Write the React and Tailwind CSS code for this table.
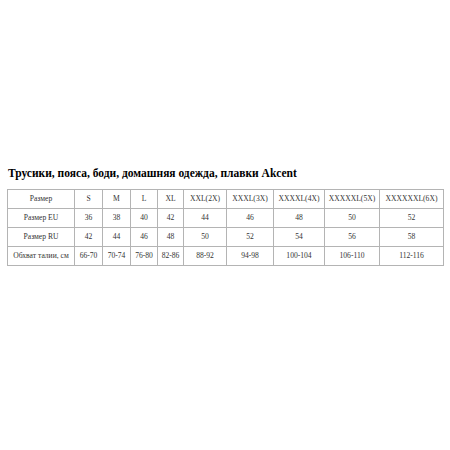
import React from "react";

const rows = [
  ["Размер", "S", "M", "L", "XL", "XXL(2X)", "XXXL(3X)", "XXXXL(4X)", "XXXXXL(5X)", "XXXXXXL(6X)"],
  ["Размер EU", "36", "38", "40", "42", "44", "46", "48", "50", "52"],
  ["Размер RU", "42", "44", "46", "48", "50", "52", "54", "56", "58"],
  ["Обхват талии, см", "66-70", "70-74", "76-80", "82-86", "88-92", "94-98", "100-104", "106-110", "112-116"],
];

const widths = ["w-[67px]", "w-[28px]", "w-[28px]", "w-[27px]", "w-[26px]", "w-[43px]", "w-[47px]", "w-[51px]", "w-[55px]", "w-[64px]"];

export default function App() {
  return (
    <div className="w-[450px] h-[450px] bg-white pt-[165px] pl-[7px] font-['Liberation_Serif'] text-black">
      <h2 className="text-[11.5px] font-bold leading-[16px] pl-[1px] mb-[8px]">
        Трусики, пояса, боди, домашняя одежда, плавки Akcent
      </h2>
      <table className="border-collapse table-fixed w-[436px]">
        <tbody>
          {rows.map((row, i) => (
            <tr key={i} className="h-[19px]">
              {row.map((cell, j) => (
                <td
                  key={j}
                  className={`${widths[j]} border border-[#b4b4b4] text-center text-[7.6px] leading-[10px] p-0 text-[#333] whitespace-nowrap`}
                >
                  {cell}
                </td>
              ))}
            </tr>
          ))}
        </tbody>
      </table>
    </div>
  );
}
